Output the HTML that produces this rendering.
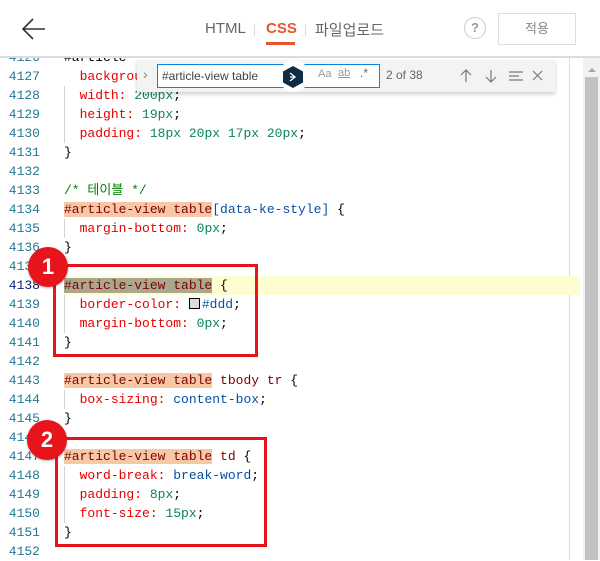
<!DOCTYPE html>
<html><head><meta charset="utf-8"><style>
*{margin:0;padding:0;box-sizing:border-box}
body{width:600px;height:560px;overflow:hidden;background:#fff;position:relative;font-family:"Liberation Sans","Noto Sans CJK KR",sans-serif}
.hdr{position:absolute;left:0;top:0;width:600px;height:58px;background:#fff;border-bottom:2px solid #d9dde2;z-index:5}
.code{position:absolute;left:0;top:48px;width:600px;font-family:"Liberation Mono","Noto Sans CJK KR",monospace;font-size:13px}
.ln{position:relative;height:19px;line-height:19px;white-space:pre}
.ln .n{position:absolute;left:0;width:40px;text-align:right;color:#237893}
.ln .c{position:absolute;left:64px;color:#000}
.hl{background:#f6c8a6}
.hl2{background:#a9a88f}
.cur{background:#fefdd2;position:absolute;left:64px;right:20px;top:0;height:19px}
.p{color:#e50000}.v{color:#098658}.s{color:#800000}.b{color:#0451a5}.ln .c.cm{color:#008000}
.guide{position:absolute;left:64px;width:1px;background:#d3d3d3}
.box{position:absolute;border:3px solid #e8141b;z-index:6}
.num{position:absolute;width:40px;height:40px;border-radius:50%;background:#e8141b;color:#fff;font-weight:bold;font-size:22px;text-align:center;line-height:40px;z-index:7;box-shadow:0 1px 2px rgba(0,0,0,.3)}
</style></head><body>
<div class="hdr">
  <svg style="position:absolute;left:22px;top:18px" width="24" height="22" viewBox="0 0 24 22"><path d="M23 11H2M11 1L1 11l10 10" fill="none" stroke="#333" stroke-width="1.6"/></svg>
  <div style="position:absolute;left:205px;top:20px;font-size:15px;color:#666">HTML</div>
  <div style="position:absolute;left:254px;top:24px;width:1px;height:12px;background:#ddd"></div>
  <div style="position:absolute;left:266px;top:20px;font-size:15px;color:#e9552a;font-weight:bold">CSS</div>
  <div style="position:absolute;left:266px;top:42px;width:29px;height:3px;background:#e9552a"></div>
  <div style="position:absolute;left:305px;top:24px;width:1px;height:12px;background:#ddd"></div>
  <div style="position:absolute;left:315px;top:19px;font-size:15px;color:#666">파일업로드</div>
  <div style="position:absolute;left:464px;top:17px;width:22px;height:22px;border:1px solid #ccc;border-radius:50%;text-align:center;line-height:20px;font-size:13px;color:#999;font-weight:bold">?</div>
  <div style="position:absolute;left:498px;top:13px;width:78px;height:32px;border:1px solid #ddd;text-align:center;line-height:30px;font-size:13px;color:#888">적용</div>
</div>
<div style="position:absolute;left:569px;top:58px;width:1px;height:502px;background:#ddd"></div>
<div style="position:absolute;left:583px;top:58px;width:17px;height:502px;background:#f1f1f1"></div>
<div style="position:absolute;left:588px;top:68px;width:0;height:0;border-left:4px solid transparent;border-right:4px solid transparent;border-bottom:4px solid #a3a3a3"></div>
<div style="position:absolute;left:585px;top:77px;width:13px;height:483px;background:#c1c1c1"></div>

<div class="code">
<div class="ln"><span class="n">4126</span><span class="c s">#article</span></div>
<div class="ln"><span class="n">4127</span><span class="c">  <span class="p">background</span></span></div>
<div class="ln"><span class="n">4128</span><span class="c">  <span class="p">width:</span> <span class="v">200px</span>;</span></div>
<div class="ln"><span class="n">4129</span><span class="c">  <span class="p">height:</span> <span class="v">19px</span>;</span></div>
<div class="ln"><span class="n">4130</span><span class="c">  <span class="p">padding:</span> <span class="v">18px 20px 17px 20px</span>;</span></div>
<div class="ln"><span class="n">4131</span><span class="c">}</span></div>
<div class="ln"><span class="n">4132</span></div>
<div class="ln"><span class="n">4133</span><span class="c cm">/* 테이블 */</span></div>
<div class="ln"><span class="n">4134</span><span class="c"><span class="s hl">#article-view table</span><span class="b">[data-ke-style]</span> {</span></div>
<div class="ln"><span class="n">4135</span><span class="c">  <span class="p">margin-bottom:</span> <span class="v">0px</span>;</span></div>
<div class="ln"><span class="n">4136</span><span class="c">}</span></div>
<div class="ln"><span class="n">4137</span></div>
<div class="ln"><span class="cur"></span><span class="n" style="color:#0b216f">4138</span><span class="c"><span class="s hl2">#article-view table</span> {</span></div>
<div class="ln"><span class="n">4139</span><span class="c">  <span class="p">border-color:</span> <span style="display:inline-block;width:11px;height:11px;border:1px solid #000;background:#ddd;vertical-align:-1px;margin-right:2px"></span><span class="b">#ddd</span>;</span></div>
<div class="ln"><span class="n">4140</span><span class="c">  <span class="p">margin-bottom:</span> <span class="v">0px</span>;</span></div>
<div class="ln"><span class="n">4141</span><span class="c">}</span></div>
<div class="ln"><span class="n">4142</span></div>
<div class="ln"><span class="n">4143</span><span class="c"><span class="s hl">#article-view table</span> <span class="s">tbody tr</span> {</span></div>
<div class="ln"><span class="n">4144</span><span class="c">  <span class="p">box-sizing:</span> <span class="b">content-box</span>;</span></div>
<div class="ln"><span class="n">4145</span><span class="c">}</span></div>
<div class="ln"><span class="n">4146</span></div>
<div class="ln"><span class="n">4147</span><span class="c"><span class="s hl">#article-view table</span> <span class="s">td</span> {</span></div>
<div class="ln"><span class="n">4148</span><span class="c">  <span class="p">word-break:</span> <span class="b">break-word</span>;</span></div>
<div class="ln"><span class="n">4149</span><span class="c">  <span class="p">padding:</span> <span class="v">8px</span>;</span></div>
<div class="ln"><span class="n">4150</span><span class="c">  <span class="p">font-size:</span> <span class="v">15px</span>;</span></div>
<div class="ln"><span class="n">4151</span><span class="c">}</span></div>
<div class="ln"><span class="n">4152</span></div>
</div>
<div class="guide" style="top:86px;height:57px"></div>
<div class="guide" style="top:219px;height:19px"></div>
<div class="guide" style="top:295px;height:38px"></div>
<div class="guide" style="top:390px;height:19px"></div>
<div class="guide" style="top:466px;height:57px"></div>

<div style="position:absolute;left:137px;top:60px;width:418px;height:32px;background:#f3f3f3;box-shadow:0 2px 4px rgba(0,0,0,.2);z-index:4">
  <div style="position:absolute;left:6px;top:6px;font-size:14px;color:#888">›</div>
  <div style="position:absolute;left:20px;top:4px;width:223px;height:24px;border:1px solid #0a84e0;background:#fff;font-size:12px;line-height:22px;padding-left:4px;color:#444">#article-view table</div>
  <div style="position:absolute;left:142px;top:0px;width:30px;height:32px;border-radius:50%;background:#fff"></div>
  <svg style="position:absolute;left:145px;top:5px" width="22" height="24" viewBox="0 0 22 24"><path d="M11 1L21 6.5V17.5L11 23L1 17.5V6.5Z" fill="#0f2b46"/><path d="M8 8l5 4-5 4M13 12h-5" fill="none" stroke="#fff" stroke-width="1.3"/></svg>
  <div style="position:absolute;left:181px;top:8px;font-size:11px;color:#999">Aa</div>
  <div style="position:absolute;left:201px;top:7px;font-size:11px;color:#999;text-decoration:underline">ab</div>
  <div style="position:absolute;left:223px;top:6px;font-size:12px;color:#666">.*</div>
  <div style="position:absolute;left:249px;top:8px;font-size:12px;color:#666">2 of 38</div>
  <svg style="position:absolute;left:320px;top:8px" width="90" height="16" viewBox="0 0 90 16"><g fill="none" stroke="#777" stroke-width="1.2"><path d="M9 14V2M4 7l5-5 5 5"/><path d="M34 2v12M29 9l5 5 5-5"/><path d="M52 4h14M52 8h10M52 12h14"/><path d="M76 3l9 9M85 3l-9 9"/></g></svg>
</div>

<div class="box" style="left:53px;top:264px;width:205px;height:93px"></div>
<div class="num" style="left:28px;top:247px">1</div>
<div class="box" style="left:55px;top:437px;width:212px;height:110px"></div>
<div class="num" style="left:27px;top:420px">2</div>
</body></html>
